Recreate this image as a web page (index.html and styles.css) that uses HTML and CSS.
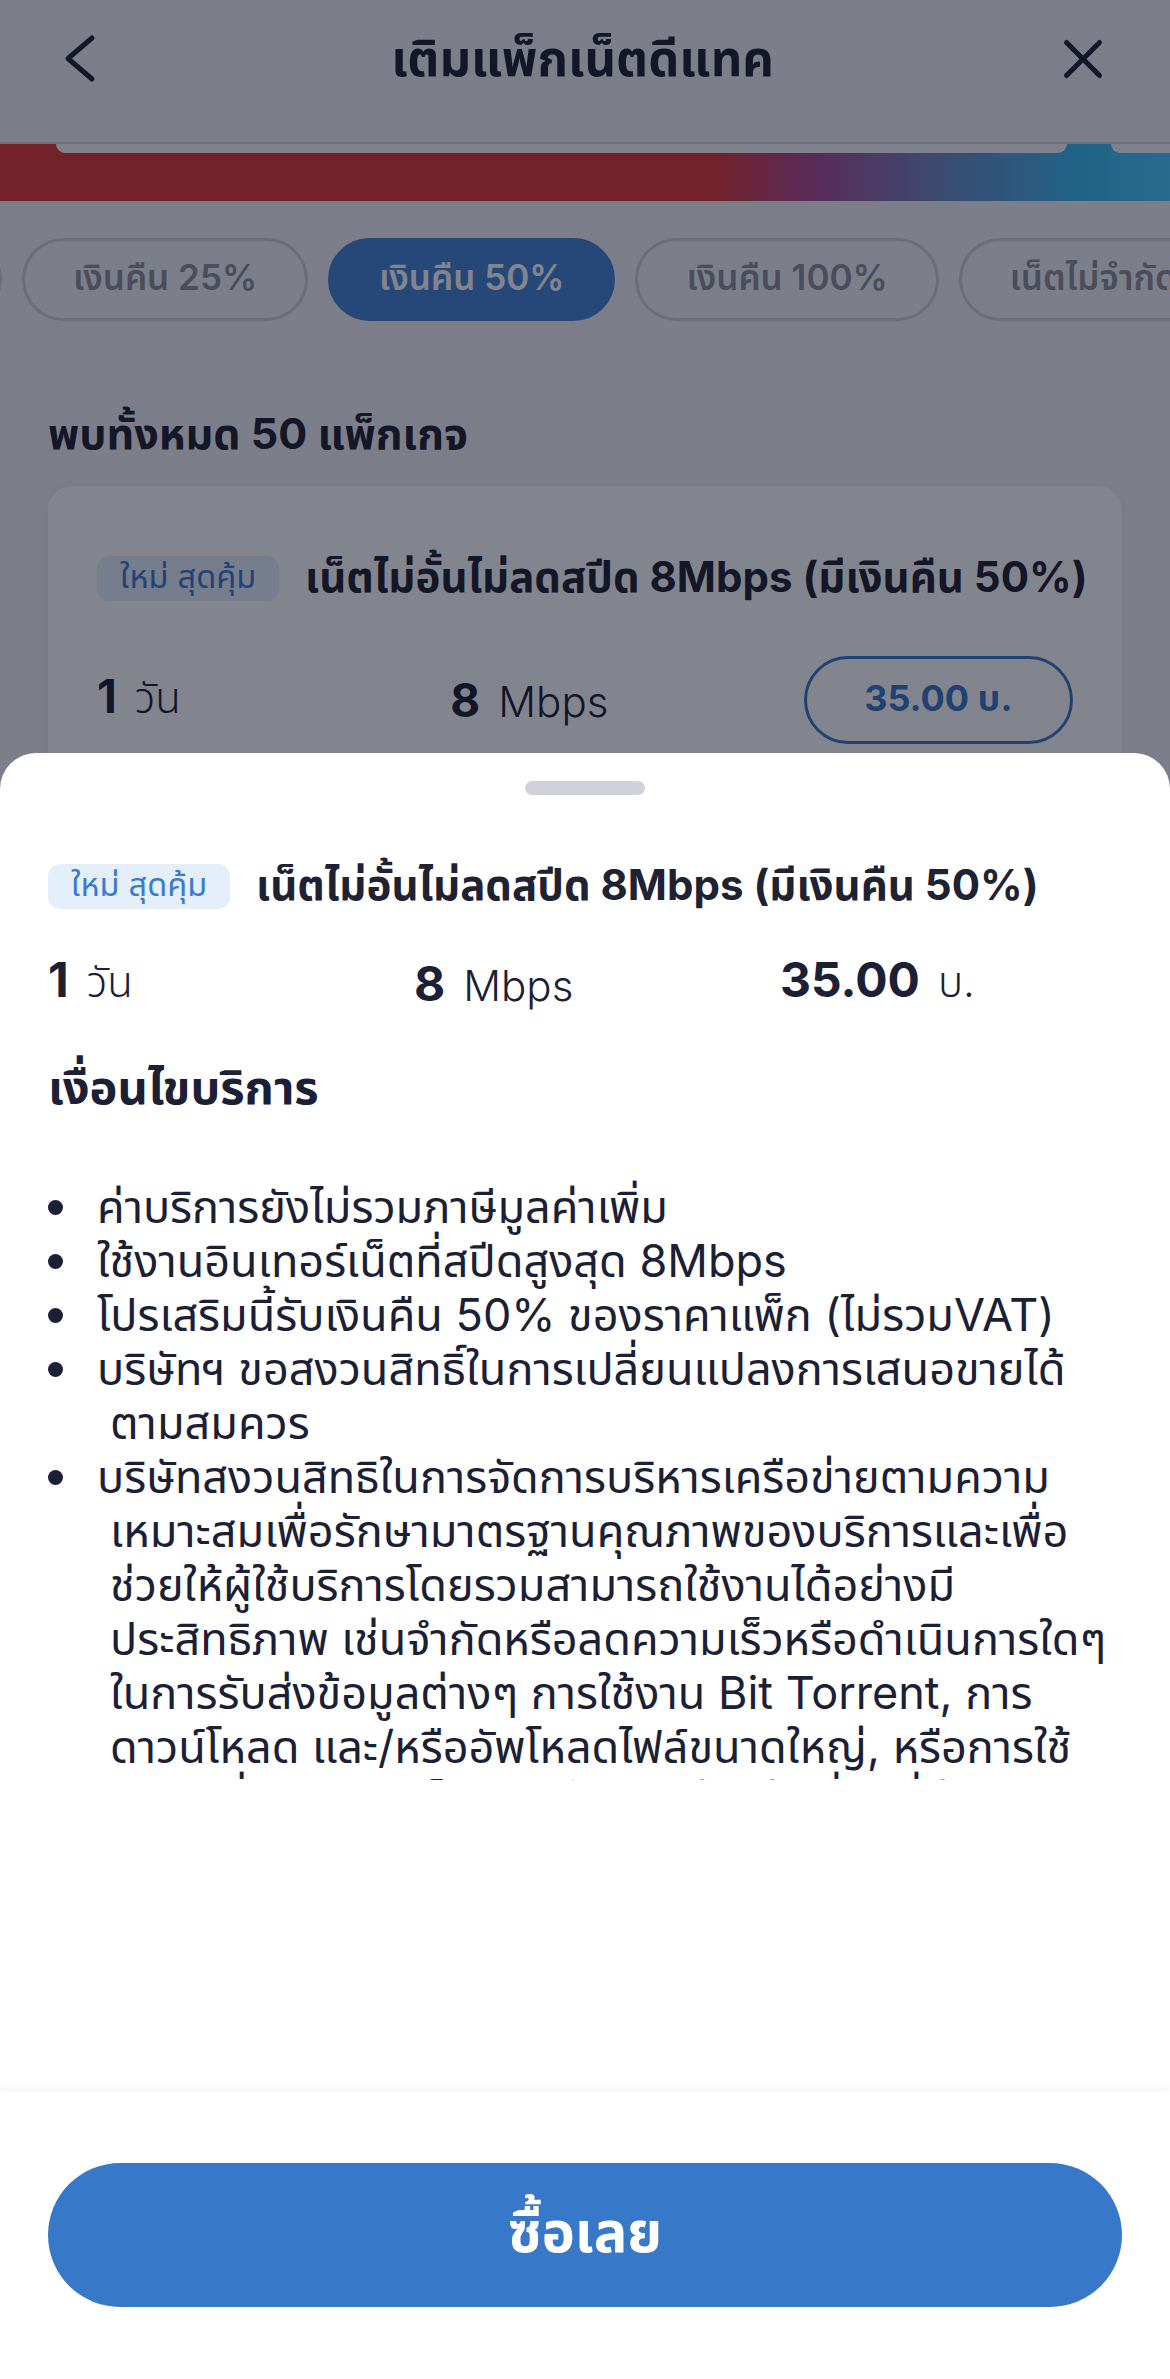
FILE: index.html
```html
<!DOCTYPE html>
<html lang="th">
<head>
<meta charset="utf-8">
<title>เติมแพ็กเน็ตดีแทค</title>
<link rel="stylesheet" href="styles.css">
</head>
<body>
<div class="app">
  <header class="topbar">
    <svg class="icon-back" viewBox="0 0 32 50" width="32" height="50"><path d="M28 4 L4 24.5 L28 45" fill="none" stroke="#1f2233" stroke-width="5" stroke-linecap="round" stroke-linejoin="round"/></svg>
    <h1 class="topbar-title">เติมแพ็กเน็ตดีแทค</h1>
    <svg class="icon-close" viewBox="0 0 44 44" width="44" height="44"><path d="M5.5 5.5 L38.5 38.5 M38.5 5.5 L5.5 38.5" fill="none" stroke="#1f2233" stroke-width="5" stroke-linecap="round"/></svg>
  </header>

  <div class="banner-strip">
    <div class="banner-tail banner-tail-main"></div>
    <div class="banner-tail banner-tail-next"></div>
  </div>

  <nav class="chips">
    <div class="chip-track">
      <span class="chip chip-hidden">ทั้งหมด</span>
      <span class="chip">เงินคืน 25%</span>
      <span class="chip chip-active">เงินคืน 50%</span>
      <span class="chip">เงินคืน 100%</span>
      <span class="chip">เน็ตไม่จำกัด</span>
    </div>
  </nav>

  <h2 class="count">พบทั้งหมด 50 แพ็กเกจ</h2>

  <article class="card">
    <div class="pkg-head">
      <span class="tag">ใหม่ สุดคุ้ม</span>
      <span class="pkg-title">เน็ตไม่อั้นไม่ลดสปีด 8Mbps (มีเงินคืน 50%)</span>
    </div>
    <div class="card-stats">
      <div class="stat"><b>1</b> <span>วัน</span></div>
      <div class="stat"><b>8</b> <span>Mbps</span></div>
      <div class="price-btn">35.00 บ.</div>
    </div>
  </article>
</div>

<div class="backdrop"></div>

<section class="sheet">
  <div class="handle"></div>
  <div class="sheet-scroll">
    <div class="pkg-head sheet-head">
      <span class="tag">ใหม่ สุดคุ้ม</span>
      <span class="pkg-title">เน็ตไม่อั้นไม่ลดสปีด 8Mbps (มีเงินคืน 50%)</span>
    </div>
    <div class="sheet-stats">
      <div class="stat"><b>1</b> <span>วัน</span></div>
      <div class="stat"><b>8</b> <span>Mbps</span></div>
      <div class="stat"><b>35.00</b> <span>บ.</span></div>
    </div>
    <h3 class="terms-title">เงื่อนไขบริการ</h3>
    <ul class="terms">
      <li><span class="dot"></span><p>ค่าบริการยังไม่รวมภาษีมูลค่าเพิ่ม</p></li>
      <li><span class="dot"></span><p>ใช้งานอินเทอร์เน็ตที่สปีดสูงสุด 8Mbps</p></li>
      <li><span class="dot"></span><p>โปรเสริมนี้รับเงินคืน 50% ของราคาแพ็ก (ไม่รวมVAT)</p></li>
      <li><span class="dot"></span><p>บริษัทฯ ขอสงวนสิทธิ์ในการเปลี่ยนแปลงการเสนอขายได้<br>ตามสมควร</p></li>
      <li><span class="dot"></span><p>บริษัทสงวนสิทธิในการจัดการบริหารเครือข่ายตามความ<br>เหมาะสมเพื่อรักษามาตรฐานคุณภาพของบริการและเพื่อ<br>ช่วยให้ผู้ใช้บริการโดยรวมสามารถใช้งานได้อย่างมี<br>ประสิทธิภาพ เช่นจำกัดหรือลดความเร็วหรือดำเนินการใดๆ<br>ในการรับส่งข้อมูลต่างๆ การใช้งาน Bit Torrent, การ<br>ดาวน์โหลด และ/หรืออัพโหลดไฟล์ขนาดใหญ่, หรือการใช้<br>งานในที่มีลักษณะเป็นการใช้งานอย่างต่อเนื่องที่ส่งผลกระทบ</p></li>
    </ul>
  </div>
  <div class="sheet-spacer"></div>
  <footer class="sheet-footer">
    <button class="buy-btn" type="button">ซื้อเลย</button>
  </footer>
</section>
</body>
</html>
```

FILE: styles.css
```css
* { box-sizing: border-box; }
html, body { margin: 0; padding: 0; }
body {
  width: 1170px;
  height: 2379px;
  overflow: hidden;
  position: relative;
  background: #f0f2f6;
  font-family: Inter, "Noto Sans Thai", "Noto Sans", sans-serif;
  color: #1c2035;
}
h1, h2, h3, p, ul { margin: 0; padding: 0; }

/* ---------- page behind the sheet ---------- */
.topbar {
  height: 144px;
  border-bottom: 2px solid #d6d8de;
  display: flex;
  align-items: center;
  justify-content: space-between;
  padding: 0 64px 24px 64px;
}
.icon-back { display: block; }
.icon-close { display: block; margin-right: 1px; }
.topbar-title {
  font-size: 49px;
  font-weight: 700;
  line-height: 60px;
  color: #1f2233;
  margin-left: 8px;
}

.banner-strip {
  height: 57px;
  background: linear-gradient(90deg, #de3834 0%, #de3834 61%, #ae4892 69%, #7288c2 80%, #3ab8f0 92%, #4ac8ff 100%);
  display: flex;
  gap: 44px;
  padding-left: 56px;
  overflow: hidden;
}
.banner-tail {
  height: 9px;
  background: #f7f8fa;
  border-radius: 0 0 20px 20px;
  flex: none;
}
.banner-tail-main { width: 1011px; }
.banner-tail-next { width: 400px; }

.chips {
  margin-top: 37px;
  height: 83px;
  overflow: hidden;
}
.chip-track {
  display: flex;
  gap: 20px;
  margin-left: -198px;
}
.chip {
  flex: none;
  height: 83px;
  padding: 0 48px;
  border: 3px solid #cdd0d6;
  border-radius: 42px;
  display: flex;
  align-items: center;
  font-size: 35px;
  font-weight: 600;
  color: #8c8f99;
  white-space: nowrap;
}
.chip-hidden { width: 200px; overflow: hidden; }
.chip-active {
  background: #4585d4;
  border-color: #4585d4;
  color: #ffffff;
}

.count {
  margin: 84px 0 0 48px;
  font-size: 43px;
  line-height: 56px;
  font-weight: 700;
  color: #1f2233;
}

.card {
  margin: 25px 48px 0 48px;
  background: #ffffff;
  border-radius: 24px;
  box-shadow: 0 2px 8px rgba(20, 30, 60, 0.06);
  padding: 70px 49px 60px 49px;
}
.pkg-head {
  display: flex;
  align-items: center;
  gap: 26px;
  height: 45px;
}
.tag {
  flex: none;
  height: 45px;
  padding: 0 23px;
  border-radius: 12px;
  background: #e5effa;
  color: #3b7ad0;
  font-size: 32.5px;
  font-weight: 400;
  display: flex;
  align-items: center;
  white-space: nowrap;
}
.pkg-title {
  font-size: 42px;
  font-weight: 700;
  color: #1f2233;
  white-space: nowrap;
}
.card-stats {
  margin-top: 55px;
  display: grid;
  grid-template-columns: 1fr 1fr 1fr;
  column-gap: 84px;
  align-items: center;
}
.stat {
  display: flex;
  align-items: baseline;
  gap: 18px;
  white-space: nowrap;
}
.stat b {
  font-size: 46px;
  font-weight: 700;
}
.stat span {
  font-size: 42px;
  font-weight: 300;
}
.price-btn {
  height: 88px;
  border: 3px solid #3878c8;
  border-radius: 44px;
  color: #3878c8;
  font-size: 36px;
  font-weight: 700;
  display: flex;
  align-items: center;
  justify-content: center;
}

/* ---------- modal ---------- */
.backdrop {
  position: absolute;
  inset: 0;
  background: rgba(8, 12, 30, 0.5);
}
.sheet {
  position: absolute;
  left: 0;
  right: 0;
  top: 753px;
  bottom: 0;
  background: #ffffff;
  border-radius: 36px 36px 0 0;
  display: flex;
  flex-direction: column;
}
.handle {
  flex: none;
  width: 120px;
  height: 14px;
  border-radius: 7px;
  background: #d0d3dc;
  margin: 28px auto 0 auto;
}
.sheet-scroll {
  flex: none;
  height: 985px;
  overflow: hidden;
  padding: 69px 48px 0 48px;
}
.sheet-stats {
  margin-top: 41px;
  display: grid;
  grid-template-columns: 1fr 1fr 1fr;
  column-gap: 24px;
  height: 60px;
  align-items: center;
}
.sheet-stats .stat b { font-size: 48px; }
.sheet-stats .stat span { font-size: 42px; }
.terms-title {
  margin-top: 50px;
  font-size: 47px;
  line-height: 54px;
  font-weight: 700;
  color: #1c2035;
}
.terms {
  list-style: none;
  margin-top: 66px;
}
.terms li {
  display: grid;
  grid-template-columns: 49px 1fr;
}
.dot {
  height: 54px;
  display: flex;
  align-items: center;
}
.dot::before {
  content: "";
  width: 15px;
  height: 15px;
  border-radius: 50%;
  background: #1c2035;
}
.terms p {
  font-size: 45px;
  line-height: 54px;
  font-weight: 400;
  padding-left: 13px;
  text-indent: -13px;
  white-space: nowrap;
}
.sheet-spacer { flex: 1; }
.sheet-footer {
  flex: none;
  height: 287px;
  padding: 71px 48px 0 48px;
  background: #ffffff;
  box-shadow: 0 -3px 10px rgba(20, 30, 60, 0.05);
}
.buy-btn {
  display: flex;
  align-items: center;
  justify-content: center;
  width: 100%;
  height: 144px;
  border: none;
  border-radius: 72px;
  background: #3878c8;
  color: #ffffff;
  font-family: inherit;
  font-size: 56px;
  font-weight: 700;
}
```
